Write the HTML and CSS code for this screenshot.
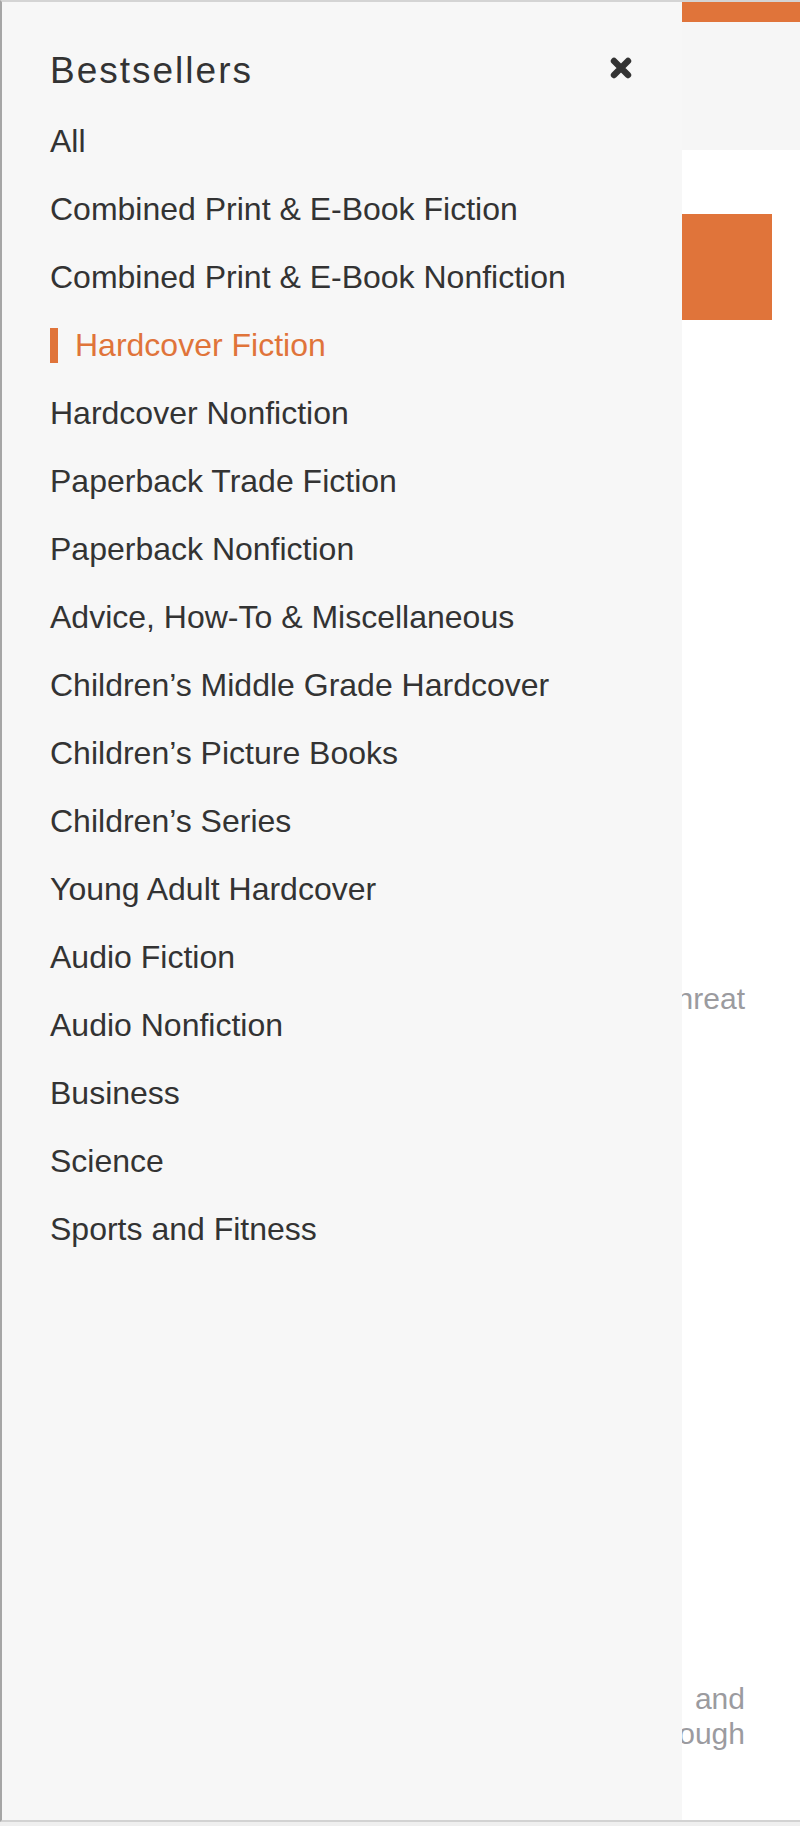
FILE: index.html
```html
<!DOCTYPE html>
<html lang="en">
<head>
<meta charset="utf-8">
<title>Bestsellers</title>
<link rel="stylesheet" href="styles.css">
</head>
<body>
<div class="frame">
  <div class="page">
    <header class="masthead">
      <div class="brandbar"></div>
    </header>
    <main class="content">
      <div class="cta"></div>
      <p class="blurb">When the world faces a threat</p>
      <p class="blurb blurb-end">A story of courage,  and<br>finding a way through</p>
    </main>
  </div>

  <aside class="drawer">
    <div class="drawer-head">
      <h2 class="drawer-title">Bestsellers</h2>
      <button class="close" type="button" aria-label="Close">
        <svg width="22" height="22" viewBox="0 0 22 22" aria-hidden="true">
          <path d="M4 4 L18 18 M18 4 L4 18" stroke="#333" stroke-width="6.4" stroke-linecap="round" fill="none"/>
        </svg>
      </button>
    </div>
    <ul class="menu">
      <li>All</li>
      <li>Combined Print &amp; E-Book Fiction</li>
      <li>Combined Print &amp; E-Book Nonfiction</li>
      <li class="active"><span>Hardcover Fiction</span></li>
      <li>Hardcover Nonfiction</li>
      <li>Paperback Trade Fiction</li>
      <li>Paperback Nonfiction</li>
      <li>Advice, How-To &amp; Miscellaneous</li>
      <li>Children’s Middle Grade Hardcover</li>
      <li>Children’s Picture Books</li>
      <li>Children’s Series</li>
      <li>Young Adult Hardcover</li>
      <li>Audio Fiction</li>
      <li>Audio Nonfiction</li>
      <li>Business</li>
      <li>Science</li>
      <li>Sports and Fitness</li>
    </ul>
  </aside>
</div>
</body>
</html>
```

FILE: styles.css
```css
html, body {
  margin: 0;
  padding: 0;
}

body {
  background: #efefef;
  font-family: "Liberation Sans", Arial, Helvetica, sans-serif;
  color: #333;
}

.frame {
  position: relative;
  height: 1822px;
  box-sizing: border-box;
  border-top: 2px solid #d4d4d4;
  border-left: 2px solid #a6a6a6;
  border-bottom: 2px solid #d2d2d2;
  background: #fff;
  overflow: hidden;
}

/* underlying page */
.masthead {
  height: 148px;
  background: #f6f6f6;
}

.brandbar {
  height: 20px;
  background: #e0743a;
}

.content {
  padding: 64px 28px 0 28px;
}

.cta {
  height: 106px;
  background: #e0743a;
}

.blurb {
  margin: 661px 0 0 0;
  padding-right: 27px;
  font-size: 30px;
  line-height: 35px;
  color: #9b9b9f;
  text-align: right;
  white-space: pre;
}

.blurb-end {
  margin-top: 665px;
  word-spacing: 4px;
}

/* drawer overlay */
.drawer {
  position: absolute;
  top: 0;
  left: 0;
  bottom: 0;
  width: 680px;
  box-sizing: border-box;
  padding: 45px 50px 0 48px;
  background: #f7f7f7;
}

.drawer-head {
  display: flex;
  justify-content: space-between;
  align-items: flex-start;
  margin-bottom: 12px;
}

.drawer-title {
  margin: 0;
  font-size: 37px;
  line-height: 48px;
  font-weight: normal;
  letter-spacing: 2px;
  color: #333;
}

.close {
  margin-top: 10px;
  padding: 0;
  border: 0;
  background: none;
  width: 22px;
  height: 22px;
  display: block;
}

.close svg {
  display: block;
}

.menu {
  list-style: none;
  margin: 0;
  padding: 0;
}

.menu li {
  font-size: 32px;
  line-height: 68px;
  height: 68px;
  color: #333;
  white-space: nowrap;
}

.menu li.active span {
  display: inline-block;
  line-height: 35px;
  border-left: 8px solid #e0743a;
  padding-left: 17px;
  color: #e0743a;
}
```
